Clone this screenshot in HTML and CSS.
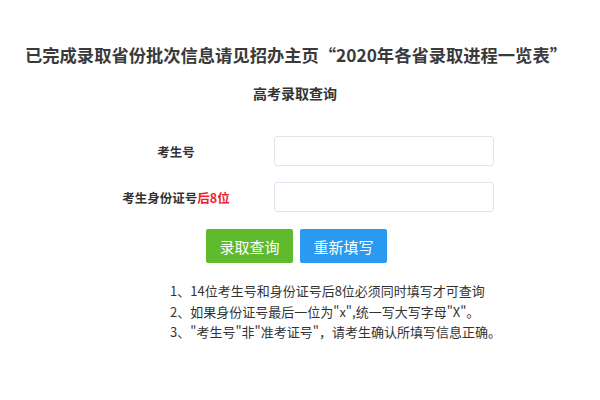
FILE: index.html
```html
<!DOCTYPE html>
<html lang="zh-CN">
<head>
<meta charset="utf-8">
<title>高考录取查询</title>
<link rel="stylesheet" href="styles.css">
</head>
<body>
<div class="page">
  <h1 class="title">已完成录取省份批次信息请见招办主页“2020年各省录取进程一览表”</h1>
  <h2 class="subtitle">高考录取查询</h2>
  <form class="form">
    <div class="row">
      <label class="label">考生号</label>
      <input class="input" type="text">
    </div>
    <div class="row">
      <label class="label">考生身份证号<span class="red">后8位</span></label>
      <input class="input" type="text">
    </div>
    <div class="buttons">
      <button type="button" class="btn btn-green">录取查询</button>
      <button type="button" class="btn btn-blue">重新填写</button>
    </div>
  </form>
  <ul class="notes">
    <li>1、14位考生号和身份证号后8位必须同时填写才可查询</li>
    <li>2、如果身份证号最后一位为"x",统一写大写字母"X"。</li>
    <li>3、"考生号"非"准考证号"，请考生确认所填写信息正确。</li>
  </ul>
</div>
</body>
</html>
```
FILE: styles.css
```css
* { box-sizing: border-box; }
html, body { margin: 0; padding: 0; background: #fff; }
body {
  font-family: "Noto Sans CJK SC", "Noto Sans", sans-serif;
  color: #333;
  width: 600px;
  height: 400px;
  overflow: hidden;
}
.page { padding-top: 43px; }
.title {
  margin: 0;
  font-size: 17.3px;
  line-height: 24px;
  font-weight: bold;
  text-align: center;
  color: #3a3a3a;
  padding-right: 8px;
  white-space: nowrap;
}
.subtitle {
  margin: 16px 0 0;
  font-size: 14px;
  line-height: 20px;
  font-weight: bold;
  text-align: center;
  color: #333;
  padding-right: 10px;
}
.form {
  margin: 33px 0 0 110px;
  display: flex;
  flex-direction: column;
  gap: 16px;
}
.row { display: flex; align-items: center; gap: 32px; }
.label {
  width: 132px;
  text-align: center;
  font-size: 12.5px;
  font-weight: bold;
  color: #333;
}
.red { color: #f0202a; }
.input {
  width: 220px;
  height: 30px;
  border: 1px solid #e4e4f0;
  border-radius: 3px;
  background: #fff;
  outline: none;
}
.buttons {
  display: flex;
  gap: 7px;
  margin-left: 96px;
  margin-top: 1px;
}
.btn {
  width: 87px;
  height: 34px;
  border: none;
  border-radius: 2px;
  color: #fff;
  font-family: inherit;
  font-size: 15px;
  padding: 0;
  cursor: pointer;
}
.btn-green { background: #5fba2e; }
.btn-blue { background: #2a9af0; }
.notes {
  list-style: none;
  margin: 18px 0 0 170px;
  padding: 0;
  font-size: 13px;
  line-height: 20.5px;
  color: #333;
}
```
